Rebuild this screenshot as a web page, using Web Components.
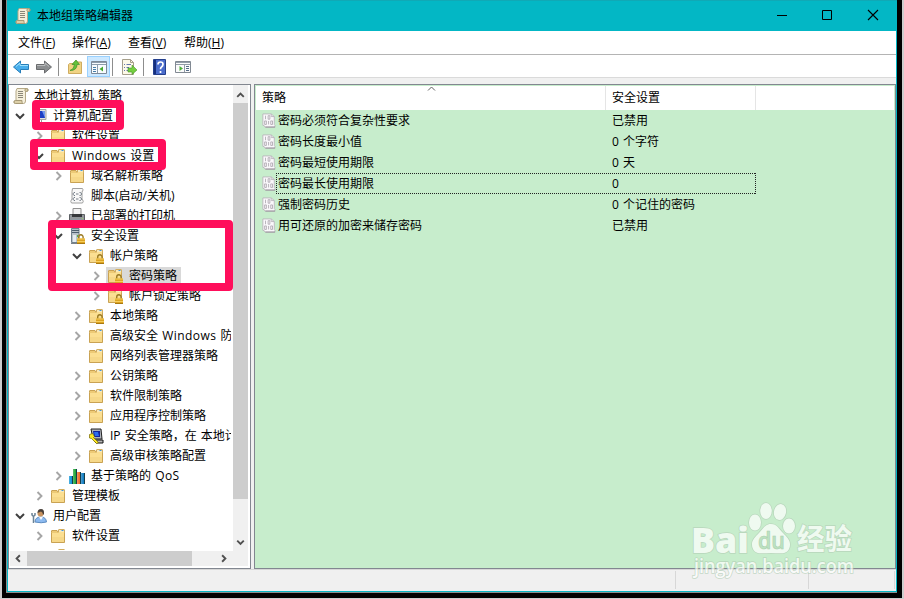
<!DOCTYPE html>
<html lang="zh-CN">
<head>
<meta charset="UTF-8">
<title>本地组策略编辑器</title>
<style>
    body {
        margin: 0;
        width: 904px;
        height: 599px;
        overflow: hidden;
        position: relative;
        background: #cdcdcd;
        color: #000;
        font: 12px/20px "Open Sans", "Noto Sans CJK SC", sans-serif;
    }
</style>
</head>
<body>
<policy-window heading="本地组策略编辑器">
    <menu-bar slot="menu"></menu-bar>
    <tool-bar slot="tools"></tool-bar>
    <policy-tree slot="tree"></policy-tree>
    <policy-list slot="list"></policy-list>
    <status-bar slot="status"></status-bar>
</policy-window>
<mark-box style="left:32px;top:100px;width:92px;height:30px"></mark-box>
<mark-box style="left:30px;top:139px;width:136px;height:31px"></mark-box>
<mark-box style="left:48px;top:220px;width:185px;height:71px"></mark-box>
<water-mark></water-mark>

<script>
// --- Icons (16x16) ---
const folder = `
    <path d="M1.500 4.500V3q0-.5.5-.5h5l1 1.500h6.500v10.500h-13z" fill="#edca76" stroke="#c9a253"/>
    <path d="M8.500 4V2q0-.5.5-.5h5q.5 0 .5.5v3H8z" fill="#f8e9bd" stroke="#d2ae60"/>
    <path d="M11.500 2.500h2" stroke="#3f94df"/>
    <path d="M2 5h6l1-1h5v10H2z" fill="#fbdf92"/>
    <path d="M2 9h12v5H2z" fill="#f4d384" opacity=".6"/>`;
const lock = `
    <path d="M9.700 11V9a2.200 2.200 0 0 1 4.400 0v2" fill="none" stroke="#9b7b25" stroke-width="1.400"/>
    <path d="M8 10.500h8V16H8z" fill="#dda322"/>
    <path d="M8 11h8M8 13.500h8" stroke="#f5ce5c"/>
    <path d="M8 15.500h8" stroke="#a87911"/>`;

const icons = {
    folder,
    lockedFolder: folder + lock,
    scroll: `
        <path d="M4 .5h9.500q1.500 0 1.500 1.500t-1.500 1.500h-1V13q0 2.500-2 2.500H2.500Q1 15.500 1 14t1.500-1.500H3V3z" fill="#f5efda" stroke="#b5a987"/>
        <path d="M2.500 12.500h6.500q-.6 2.500 1 3H2.500Q1 15.500 1 14t1.500-1.500z" fill="#dccfa8" stroke="#a79a76"/>
        <path d="M12.500 3.500q-1.300-1 0-3h1q1.500 0 1.500 1.500t-1.500 1.500z" fill="#d6c9a0" stroke="#a79a76"/>
        <path d="M5 3.500h5M5 5.500h5M5 7.500h5M5 9.500h5" stroke="#8b8778"/>`,
    computer: `
        <path d="M5.500 1.500h9.500v10h-9.500z" fill="#e2e2e0" stroke="#a5a5a5"/>
        <path d="M7 3h7v7H7z" fill="#1d3fc4"/><path d="M11 3h3v7z" fill="#7398ed"/>
        <path d="M6 14.500h9M10.500 12v2" stroke="#999"/>`,
    script: `
        <path d="M3.500.5h10q1 1 0 3H13v8h.5q1.500 2 0 3.500h-11q-1.500-1.500 0-3.500H3v-8z" fill="#f8f8f8" stroke="#a0a0a0"/>
        <path d="M6 4.500H5L3.800 6 5 7.500h1M10.500 4.500h1L12.700 6l-1.200 1.500h-1M7 6h2.500M6 9.500H5L3.800 11 5 12.500h1M10.500 9.500h1l1.200 1.500-1.200 1.500h-1M7 11h2.500" fill="none" stroke="#66707c" stroke-width=".9"/>`,
    printer: `
        <path d="M4 .5h8v7H4z" fill="#f2f2f2" stroke="#929292"/>
        <path d="M.5 6.500h15v6.500H.5z" fill="#92969a" stroke="#5d6064"/>
        <path d="M3 6h10v3H3z" fill="#36383b"/><path d="M3.500 12h9v3h-9z" fill="#d8ecfb" stroke="#8da0b1"/>
        <path d="M13 10.500h1" stroke="#8edb65"/>`,
    server: `
        <path d="M2.500.5h7.500v14h-7.500z" fill="#b8c2ca" stroke="#71808c"/>
        <path d="M3 2.500h7M3 4.500h7" stroke="#4c5e6f"/><path d="M4 7v7h3V7z" fill="#e3ebf0"/>
        <path d="M8.500 7v2" stroke="#56b24d"/><path d="M2 15.500h7" stroke="#7b8289"/>` + lock,
    ipsec: `
        <path d="M3 1h10l1 10H5z" fill="#aeb2ba" stroke="#222"/>
        <path d="M5 3h7v6H6z" fill="#12239b"/><path d="M6 4h4l1 4H7z" fill="#2d6eed"/>
        <path d="M6 12h9v3H8z" fill="#b7b7b7" stroke="#111"/>
        <path d="M1.500 6.500l3-1 2 3-1 1 5 5-2 1-5-5-2-.5z" fill="#ffec22" stroke="#776700" stroke-width=".7"/>`,
    chart: `
        <path d="M0 8h4v8H0z" fill="#1496d8"/><path d="M4 1h4v15H4z" fill="#24a63a"/>
        <path d="M8 4h4v12H8z" fill="#f36f2e"/><path d="M12 5h4v11h-4z" fill="#147fc3"/>
        <path d="M.8 8v8M4.800 1v15M8.800 4v12M12.800 5v11" stroke="#fff" stroke-opacity=".3"/>
        <path d="M3.500 8v8M7.500 1v15M11.500 4v12M15.500 5v11" stroke="#153c48"/>`,
    user: `
        <path d="M4 14q0-5 6-5 5 0 5.500 5-5 1.500-11.500 0z" fill="#8cbaf0" stroke="#5c8bc0"/>
        <path d="M8 9l2 3 2-3z" fill="#f8fbff"/>
        <circle cx="9.500" cy="5.500" r="3" fill="#c99461"/>
        <path d="M6.500 5q0-4 3.500-4t3 5l-1 1q0-3-2-3.500z" fill="#494039"/>
        <path d="M2.500 8v7M1 5v2l1.500 1.500L4 7V5" fill="none" stroke="#6a8296" stroke-width="1.500"/>`,
    back: `<path d="M.5 8l7-6v3.500h8v5h-8V14z" fill="#47adeb" stroke="#267db9"/><path d="M3 7.500l4-3.300v2.300h8" fill="none" stroke="#9de0fc"/>`,
    forward: `<path d="M15.500 8l-7-6v3.500h-8v5h8V14z" fill="#8b8e90" stroke="#696b6d"/><path d="M1 6.500h8V4l4 3.500" fill="none" stroke="#babcbd"/>`,
    up: `
        <path d="M1.500 14.500V5.500l1-1h4l1-1.500h7v11.500z" fill="#f0d384" stroke="#cfac60"/>
        <path d="M10 5.500h3" stroke="#fff4c9"/>
        <path d="M3 11.500q4-1 4.500-6H5L9 1l3.500 4.500H10q0 6-7 6z" fill="#63c23b" stroke="#388e24" stroke-width=".7"/>`,
    panes: `
        <path d="M.5 2.500h15v12H.5z" fill="#f8fbfd" stroke="#7d8997"/>
        <path d="M1 3.500h14M1 5.500h14" stroke="#8c9cac"/><path d="M6.500 6v8" stroke="#8c9cac"/>
        <path d="M2 8.500h3M2 10.500h3M2 12.500h3" stroke="#477ea9"/><path d="M12 7.500v5L8.500 10z" fill="#45a92f"/>`,
    exportList: `
        <path d="M1.500.5h8l3 3v12h-11z" fill="#fdf9e8" stroke="#a59f8b"/><path d="M9.500.5v3h3" fill="none" stroke="#a59f8b"/>
        <path d="M3 5.500h1M3 8.500h1M3 11.500h1M5.500 5.500H10M5.500 8.500H8M5.500 11.500H8" stroke="#6678ac"/>
        <path d="M7 9h4V6l5 5-5 4.500V13H7z" fill="#74cf40" stroke="#48952a" stroke-width=".6"/>`,
    help: `
        <path d="M1.500.5h12v15h-12z" fill="#4a6ccb" stroke="#243f8c"/><path d="M3 1v14" stroke="#152f7e" stroke-width="2"/>
        <path d="M6 5.500Q6 3 8.500 3t2.500 2.300Q11 7 9.500 8q-1 .7-1 2.300M8.500 12v2" fill="none" stroke="#fff" stroke-width="1.700"/>`,
    console: `
        <path d="M.5 2.500h15v11H.5z" fill="#fbfbfb" stroke="#818993"/>
        <path d="M1 3.500h14M1 5.500h14M9.500 6v7" stroke="#929da8"/>
        <path d="M4.500 7v5L8 9.500z" fill="#4db139"/><path d="M11 7.500h3M11 9.500h3M11 11.500h3" stroke="#546c87"/>`,
    policy: `
        <path d="M1 .5h9.500l3.500 3v9q1.500 1 .5 3H3.500Q3 13.500 1 13.500z" fill="#faf8fb" stroke="#b9b3bb"/>
        <path d="M10.500.5v3H14" fill="none" stroke="#b9b3bb"/>
        <path d="M4 2.500v4M7 2.500h2v4H7zM3 8.500h2v4H3zM7.500 8.500v4M10 8.500h2v4h-2z" fill="none" stroke="#a8a2ab" stroke-width=".9"/>
        <path d="M4 15.500h11" stroke="#938d96"/>`,
    open: `<path d="M4 6l4 4 4-4" fill="none" stroke="#404040" stroke-width="2"/>`,
    closed: `<path d="M6.500 4l4 4-4 4" fill="none" stroke="#a6a6a6" stroke-width="1.900"/>`,
    arrowUp: `<path d="M4.500 10L8 6.500 11.500 10" fill="none" stroke="#505050" stroke-width="2"/>`,
    arrowDown: `<path d="M4.500 6.500L8 10l3.500-3.500" fill="none" stroke="#505050" stroke-width="2"/>`,
    arrowLeft: `<path d="M10 4.500L6.500 8l3.500 3.500" fill="none" stroke="#505050" stroke-width="2"/>`,
    arrowRight: `<path d="M6 4.500L9.500 8 6 11.500" fill="none" stroke="#505050" stroke-width="2"/>`,
    minimize: `<path d="M3 8.500h10" stroke="#000"/>`,
    maximize: `<path d="M3.500 3.500h9v9h-9z" fill="none" stroke="#000"/>`,
    close: `<path d="M3 3l10 10M13 3L3 13" stroke="#000" stroke-width="1.100"/>`
};

class UiIcon extends HTMLElement {
    constructor() {
        super();
        this.attachShadow({ mode: 'open' });
    }

    connectedCallback() {
        this.shadowRoot.innerHTML = `
            <style>
                :host { display: block; width: 16px; height: 16px; flex: none; }
                svg { display: block; width: 100%; height: 100%; }
            </style>
            <svg viewBox="0 0 16 16">${icons[this.getAttribute('name')] || ''}</svg>
        `;
    }
}
customElements.define('ui-icon', UiIcon);

// --- Window frame ---
class PolicyWindow extends HTMLElement {
    constructor() {
        super();
        this.attachShadow({ mode: 'open' });
    }

    connectedCallback() {
        this.shadowRoot.innerHTML = `
            <style>
                :host {
                    display: block;
                    box-sizing: border-box;
                    height: 598px;
                    margin: 0 2px;
                    padding: 0 5px 5px 4px;
                    background: #000;
                }
                .window {
                    box-sizing: border-box;
                    height: 593px;
                    border-left: 1px solid #8c8c8c;
                    border-bottom: 1px solid #8c8c8c;
                    display: flex;
                    flex-direction: column;
                    background: #03b7c5;
                }
                header {
                    height: 31px;
                    box-sizing: border-box;
                    border-top: 1px solid #10a9b6;
                    padding: 0 16px 0 8px;
                    display: flex;
                    align-items: center;
                }
                h1 { font: inherit; margin: 0 auto 0 6px; }
                .controls { display: flex; padding-bottom: 2px; }
                .controls ui-icon + ui-icon { margin-left: 29px; }
                .controls ui-icon:last-child { margin-left: 30px; }
                .body {
                    flex: 1;
                    min-height: 0;
                    margin: 0 1px 1px;
                    background: #f0f0f0;
                    display: flex;
                    flex-direction: column;
                }
                .panes { display: flex; gap: 3px; height: 485px; padding-top: 6px; }
            </style>
            <div class="window">
                <header>
                    <ui-icon name="scroll"></ui-icon>
                    <h1>${this.getAttribute('heading')}</h1>
                    <div class="controls">
                        <ui-icon name="minimize"></ui-icon>
                        <ui-icon name="maximize"></ui-icon>
                        <ui-icon name="close"></ui-icon>
                    </div>
                </header>
                <div class="body">
                    <slot name="menu"></slot>
                    <slot name="tools"></slot>
                    <div class="panes"><slot name="tree"></slot><slot name="list"></slot></div>
                    <slot name="status"></slot>
                </div>
            </div>
        `;
    }
}
customElements.define('policy-window', PolicyWindow);

class MenuBar extends HTMLElement {
    constructor() {
        super();
        this.attachShadow({ mode: 'open' });
        const items = [['文件', 'F'], ['操作', 'A'], ['查看', 'V'], ['帮助', 'H']];
        this.shadowRoot.innerHTML = `
            <style>
                :host {
                    display: flex;
                    height: 23px;
                    padding-left: 10px;
                    line-height: 24px;
                    background: #fff;
                    border-bottom: 1px solid #b4b4b4;
                }
                span { width: 56px; white-space: nowrap; }
                span:first-of-type { width: 54px; }
                u { text-underline-offset: 1px; }
            </style>
            ${items.map(([label, key]) => `<span>${label}(<u>${key}</u>)</span>`).join('')}
        `;
    }
}
customElements.define('menu-bar', MenuBar);

class ToolBar extends HTMLElement {
    constructor() {
        super();
        this.attachShadow({ mode: 'open' });
        this.shadowRoot.innerHTML = `
            <style>
                :host {
                    display: flex;
                    align-items: center;
                    height: 22px;
                    padding: 0 0 0 5px;
                    background: #fff;
                    border-bottom: 1px solid #dadada;
                }
                ui-icon { margin-right: 7px; margin-top: 2px; }
                i { width: 1px; height: 18px; background: #8d8d8d; margin-right: 8px; margin-top: 2px; }
                .pressed {
                    box-sizing: border-box;
                    width: 23px;
                    height: 21px;
                    margin-right: 2px;
                    margin-top: 1px;
                    padding: 1px 3px;
                    background: #cce8ff;
                    border: 1px solid #99d1ff;
                }
                .pressed ui-icon { margin: 1px 0 0; }
            </style>
            <ui-icon name="back"></ui-icon>
            <ui-icon name="forward" style="margin-right:6px"></ui-icon>
            <i></i>
            <ui-icon name="up" style="margin-right:4px"></ui-icon>
            <div class="pressed"><ui-icon name="panes"></ui-icon></div>
            <i></i>
            <ui-icon name="exportList" style="margin-right:6px"></ui-icon>
            <i></i>
            <ui-icon name="help"></ui-icon>
            <ui-icon name="console"></ui-icon>
        `;
    }
}
customElements.define('tool-bar', ToolBar);

// --- Tree pane ---
class TreeRow extends HTMLElement {
    constructor() {
        super();
        this.attachShadow({ mode: 'open' });
    }

    connectedCallback() {
        const level = Number(this.getAttribute('level'));
        const state = this.getAttribute('state') || '';
        this.shadowRoot.innerHTML = `
            <style>
                :host {
                    display: flex;
                    align-items: center;
                    height: 20px;
                    white-space: nowrap;
                    padding-left: ${level * 19 - 16}px;
                }
                :host([level="0"]) { padding-left: 1px; }
                .label { padding: 0 4px 0 3px; margin-left: 3px; height: 18px; line-height: 18px; word-spacing: 1px; }
                .kind { margin-left: 1px; }
                .pick { display: flex; align-items: center; height: 18px; margin-left: 2px; }
                :host([level="0"]) .label { margin-left: 2px; }
                :host([selected]) .pick { background: #d9d9d9; }
                ::slotted(b) { font-weight: inherit; letter-spacing: .45px; }
            </style>
            ${level ? `<ui-icon name="${state}"></ui-icon>` : ''}
            <div class="pick">
                <ui-icon class="kind" name="${this.getAttribute('icon')}"></ui-icon>
                <span class="label"><slot></slot></span>
            </div>
        `;
    }
}
customElements.define('tree-row', TreeRow);

const treeRows = [
    [0, '', 'scroll', '本地计算机 策略'],
    [1, 'open', 'computer', '计算机配置'],
    [2, 'closed', 'folder', '软件设置'],
    [2, 'open', 'folder', '<b>Windows</b> 设置'],
    [3, 'closed', 'folder', '域名解析策略'],
    [3, '', 'script', '脚本(启动/关机)'],
    [3, 'closed', 'printer', '已部署的打印机'],
    [3, 'open', 'server', '安全设置'],
    [4, 'open', 'lockedFolder', '帐户策略'],
    [5, 'closed', 'lockedFolder', '密码策略', 'selected'],
    [5, 'closed', 'lockedFolder', '帐户锁定策略'],
    [4, 'closed', 'lockedFolder', '本地策略'],
    [4, 'closed', 'folder', '高级安全 <b>Windows</b> 防火墙'],
    [4, '', 'folder', '网络列表管理器策略'],
    [4, 'closed', 'folder', '公钥策略'],
    [4, 'closed', 'folder', '软件限制策略'],
    [4, 'closed', 'folder', '应用程序控制策略'],
    [4, 'closed', 'ipsec', 'IP 安全策略，在 本地计算机'],
    [4, 'closed', 'folder', '高级审核策略配置'],
    [3, 'closed', 'chart', '基于策略的 <b>QoS</b>'],
    [2, 'closed', 'folder', '管理模板'],
    [1, 'open', 'user', '用户配置'],
    [2, 'closed', 'folder', '软件设置'],
    [2, '', 'folder', '']
];

class PolicyTree extends HTMLElement {
    constructor() {
        super();
        this.attachShadow({ mode: 'open' });
        this.shadowRoot.innerHTML = `
            <style>
                :host {
                    display: grid;
                    box-sizing: border-box;
                    width: 243px;
                    height: 485px;
                    border: 1px solid #828790;
                    grid-template: 466px 15px / 224px 15px;
                    background: #fff;
                }
                .rows { overflow: hidden; padding-top: 1px; min-width: 0; margin: 0 2px 1px 0; }
                .vbar, .hbar { background: #f0f0f0; display: flex; }
                .vbar { flex-direction: column; padding: 2px 0 1px; }
                .vbar ui-icon { width: 15px; }
                .vbar div { height: 396px; background: #cdcdcd; }
                .vbar ui-icon:last-child { margin-top: auto; }
                .hbar { grid-column: 1 / 3; margin-left: 1px; }
                .hbar ui-icon { height: 15px; }
                .hbar div { width: 165px; background: #cdcdcd; margin-left: 1px; }
                .hbar ui-icon:last-child { margin-left: auto; margin-right: 16px; }
            </style>
            <div class="rows">
                ${treeRows.map(([level, state, icon, text, flag = '']) =>
                    `<tree-row level="${level}" state="${state}" icon="${icon}" ${flag}>${text}</tree-row>`).join('')}
            </div>
            <div class="vbar"><ui-icon name="arrowUp"></ui-icon><div></div><ui-icon name="arrowDown"></ui-icon></div>
            <div class="hbar"><ui-icon name="arrowLeft"></ui-icon><div></div><ui-icon name="arrowRight"></ui-icon></div>
        `;
    }
}
customElements.define('policy-tree', PolicyTree);

// --- Policy list ---
const policies = [
    ['密码必须符合复杂性要求', '已禁用'],
    ['密码长度最小值', '0 个字符'],
    ['密码最短使用期限', '0 天'],
    ['密码最长使用期限', '0', 'focused'],
    ['强制密码历史', '0 个记住的密码'],
    ['用可还原的加密来储存密码', '已禁用']
];

class PolicyList extends HTMLElement {
    constructor() {
        super();
        this.attachShadow({ mode: 'open' });
        this.shadowRoot.innerHTML = `
            <style>
                :host {
                    display: block;
                    box-sizing: border-box;
                    width: 642px;
                    height: 485px;
                    border: 1px solid #828790;
                    padding: 1px 0 0 1px;
                    background: #c7edcc;
                }
                .head {
                    display: grid;
                    grid-template-columns: 350px 150px 1fr;
                    height: 24px;
                    line-height: 24px;
                    margin-right: 1px;
                    background: #fff;
                    position: relative;
                }
                .head span { padding-left: 6px; border-right: 1px solid #e5e5e5; }
                .head span:last-of-type { border: 0; }
                .head svg { position: absolute; left: 171px; top: 0; }
                .row { display: flex; height: 21px; line-height: 20px; padding-left: 6px; align-items: flex-start; }
                .row ui-icon { width: 14px; height: 15px; margin-top: 3px; }
                .cells {
                    box-sizing: border-box;
                    width: 480px;
                    height: 21px;
                    display: grid;
                    grid-template-columns: 334px 1fr;
                    padding: 1px 1px 1px 2px;
                    word-spacing: 1px;
                }
                .cells span { height: 18px; }
                .focused .cells {
                    background:
                        repeating-linear-gradient(90deg, #222 0 1px, transparent 1px 2px) 0 0 / 100% 1px no-repeat,
                        repeating-linear-gradient(90deg, #222 0 1px, transparent 1px 2px) 0 100% / 100% 1px no-repeat,
                        repeating-linear-gradient(#222 0 1px, transparent 1px 2px) 0 0 / 1px 100% no-repeat,
                        repeating-linear-gradient(#222 0 1px, transparent 1px 2px) 100% 0 / 1px 100% no-repeat;
                }
            </style>
            <div class="head">
                <span>策略</span><span>安全设置</span><span></span>
                <svg width="9" height="5"><path d="M1 4.500l3.500-3.500L8 4.500" fill="none" stroke="#606060"/></svg>
            </div>
            ${policies.map(([name, value, state = '']) => `
                <div class="row ${state}">
                    <ui-icon name="policy"></ui-icon>
                    <div class="cells"><span>${name}</span><span>${value}</span></div>
                </div>`).join('')}
        `;
    }
}
customElements.define('policy-list', PolicyList);

class StatusBar extends HTMLElement {
    constructor() {
        super();
        this.attachShadow({ mode: 'open' });
        this.shadowRoot.innerHTML = `
            <style>
                :host {
                    display: grid;
                    grid-template-columns: 668px 133px 86px;
                    height: 18px;
                    padding: 1px 0 2px;
                    border-top: 1px solid #d7d7d7;
                }
                span { border-right: 1px solid #d7d7d7; }
            </style>
            <span></span><span></span><span></span>
        `;
    }
}
customElements.define('status-bar', StatusBar);

// --- Overlays ---
class MarkBox extends HTMLElement {
    constructor() {
        super();
        this.attachShadow({ mode: 'open' });
        this.shadowRoot.innerHTML = `
            <style>
                :host {
                    position: absolute;
                    box-sizing: border-box;
                    border: 8px solid #ff0e5b;
                    border-radius: 4px;
                }
            </style>
        `;
    }
}
customElements.define('mark-box', MarkBox);

class WaterMark extends HTMLElement {
    constructor() {
        super();
        this.attachShadow({ mode: 'open' });
        this.shadowRoot.innerHTML = `
            <style>
                :host { position: absolute; left: 688px; top: 498px; width: 176px; height: 86px; opacity: .72; }
                svg { display: block; }
                text { font-family: "Open Sans", "Noto Sans CJK SC", sans-serif; }
                .logo { fill: #fff; stroke: #b4cfb7; stroke-width: 1.500; paint-order: stroke; }
            </style>
            <svg width="176" height="86">
                <g class="logo">
                    <text x="3" y="54.500" font-size="36" font-weight="800" textLength="58" lengthAdjust="spacingAndGlyphs">Bai</text>
                    <ellipse cx="67" cy="24.500" rx="6" ry="8"/>
                    <ellipse cx="78" cy="13" rx="5.800" ry="8"/>
                    <ellipse cx="92" cy="14" rx="6" ry="8" transform="rotate(12 92 14)"/>
                    <ellipse cx="101" cy="28" rx="6" ry="7.500"/>
                    <path d="M83 26c-6 0-8 5-12 9-5 5-9 9-6 16 3 6 10 4 18 4s15 2 18-4c3-7-1-11-6-16-4-4-6-9-12-9z"/>
                    <text x="109" y="52" font-size="29" font-weight="700" textLength="55" lengthAdjust="spacingAndGlyphs">经验</text>
                    <text x="6" y="75" font-size="19" font-weight="600" textLength="160" lengthAdjust="spacingAndGlyphs">jingyan.baidu.com</text>
                </g>
                <text x="70" y="51" font-size="23" font-weight="600" fill="#b9dfbe" stroke="#9fc3a4" stroke-width=".6" textLength="27" lengthAdjust="spacingAndGlyphs">du</text>
            </svg>
        `;
    }
}
customElements.define('water-mark', WaterMark);
</script>
</body>
</html>
